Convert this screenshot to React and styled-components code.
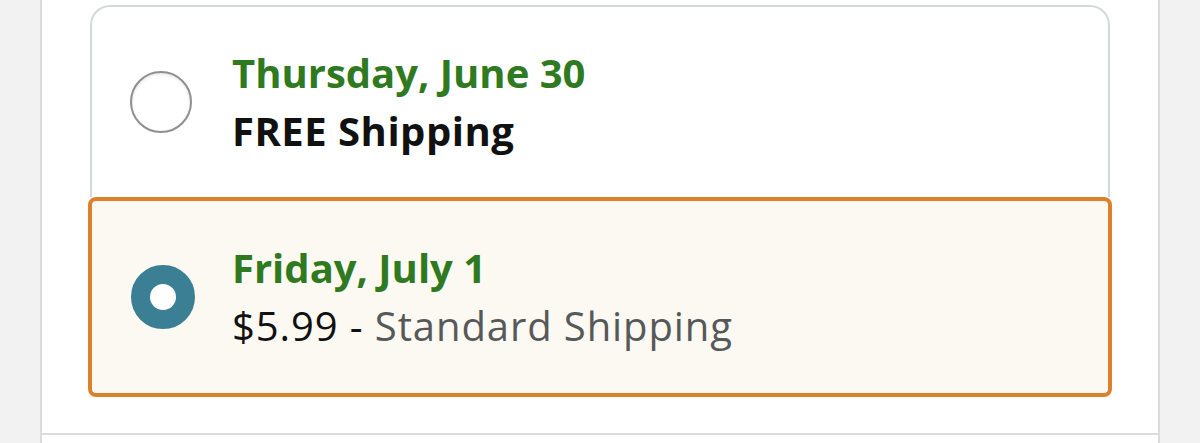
import React from "react";
import styled, { createGlobalStyle } from "styled-components";

const Global = createGlobalStyle`
  html, body { margin: 0; padding: 0; background: #f2f2f2; }
  body { font-family: "Open Sans", "Noto Sans", sans-serif; }
`;

const Page = styled.div`
  width: 1200px;
  height: 443px;
  overflow: hidden;
  padding-left: 40px;
  box-sizing: border-box;
`;

const Panel = styled.div`
  width: 1120px;
  height: 443px;
  box-sizing: border-box;
  background: #fff;
  border-left: 2px solid #dcdcdc;
  border-right: 2px solid #dcdcdc;
  display: flex;
  flex-direction: column;
`;

const Section = styled.div`
  padding: 5px 48px 0 48px;
  height: 435px;
  flex: none;
  box-sizing: border-box;
  border-bottom: 2px solid #dcdcdc;
`;

const Card = styled.div`
  display: flex;
  flex-direction: column;
`;

const Option = styled.div`
  display: flex;
  align-items: center;
  box-sizing: border-box;
  ${(p) =>
    p.$selected
      ? `
    height: 200px;
    margin: 0 -2px;
    gap: 37px;
    padding-left: 39px;
    border: 4px solid #dd7f2d;
    border-radius: 8px;
    background: #fcf8f2;
  `
      : `
    height: 192px;
    gap: 40px;
    padding-left: 38px;
    border: 2px solid #d5d9d9;
    border-bottom: none;
    border-radius: 20px 20px 0 0;
    background: #fff;
  `}
`;

const Radio = styled.span`
  flex: none;
  border-radius: 50%;
  box-sizing: border-box;
  background: #fff;
  ${(p) =>
    p.$checked
      ? `
    width: 64px;
    height: 64px;
    border: 19px solid #3a7f93;
  `
      : `
    width: 62px;
    height: 62px;
    border: 2px solid #8f8f8f;
    box-shadow: inset 0 1px 3px rgba(0,0,0,0.12);
  `}
`;

const Text = styled.div`
  display: flex;
  flex-direction: column;
`;

const DateLine = styled.div`
  color: #2f7a21;
  font-weight: 700;
  font-size: 40px;
  line-height: 58px;
`;

const PriceLine = styled.div`
  font-size: 40px;
  line-height: 58px;
  color: #111;
  font-weight: ${(p) => (p.$bold ? 700 : 400)};
  letter-spacing: ${(p) => (p.$bold ? "0.5px" : "0.9px")};
`;

const Muted = styled.span`
  color: #565959;
`;

export default function App() {
  return (
    <>
      <Global />
      <Page>
        <Panel>
          <Section>
            <Card>
              <Option>
                <Radio />
                <Text>
                  <DateLine>Thursday, June 30</DateLine>
                  <PriceLine $bold>FREE Shipping</PriceLine>
                </Text>
              </Option>
              <Option $selected>
                <Radio $checked />
                <Text>
                  <DateLine>Friday, July 1</DateLine>
                  <PriceLine>
                    $5.99 - <Muted>Standard Shipping</Muted>
                  </PriceLine>
                </Text>
              </Option>
            </Card>
          </Section>
        </Panel>
      </Page>
    </>
  );
}
